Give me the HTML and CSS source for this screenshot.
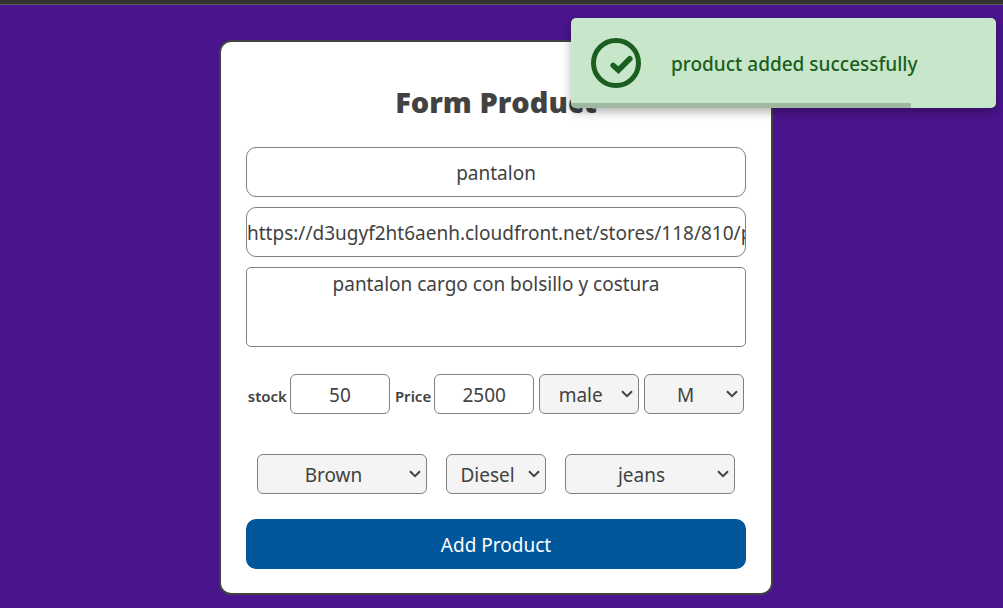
FILE: index.html
```html
<!DOCTYPE html>
<html lang="en">
<head>
<meta charset="utf-8">
<meta name="viewport" content="width=device-width, initial-scale=1">
<title>Form Product</title>
<link rel="stylesheet" href="styles.css">
</head>
<body>
<div class="topbar"></div>
<main class="page">
  <form class="card">
    <h1 class="title">Form Product</h1>
    <input class="field" type="text" aria-label="Name" value="pantalon">
    <input class="field" type="text" aria-label="Image" value="https://d3ugyf2ht6aenh.cloudfront.net/stores/118/810/products/pantalon">
    <textarea class="field area" aria-label="Description">pantalon cargo con bolsillo y costura</textarea>
    <div class="row details">
      <div class="pair">
        <label class="label" for="stock">stock</label>
        <input class="control" id="stock" type="text" inputmode="numeric" value="50">
      </div>
      <div class="pair">
        <label class="label" for="price">Price</label>
        <input class="control" id="price" type="text" inputmode="numeric" value="2500">
      </div>
      <select class="control select" aria-label="Gender"><option>male</option></select>
      <select class="control select" aria-label="Size"><option>M</option></select>
    </div>
    <div class="row kinds">
      <select class="control select wide" aria-label="Color"><option>Brown</option></select>
      <select class="control select" aria-label="Brand"><option>Diesel</option></select>
      <select class="control select wide" aria-label="Category"><option>jeans</option></select>
    </div>
    <button class="submit" type="button">Add Product</button>
  </form>
</main>
<div class="toast" role="status">
  <svg class="toast-icon" viewBox="0 0 50 50" aria-hidden="true">
    <circle cx="25" cy="25" r="22.5" fill="none" stroke="currentColor" stroke-width="5"/>
    <path d="M22.2 27.5 27.4 32.2 38.8 20.8" fill="none" stroke="currentColor" stroke-width="5.6" stroke-linecap="round"/>
  </svg>
  <span class="toast-text">product added successfully</span>
  <div class="toast-progress"></div>
</div>
</body>
</html>
```
FILE: styles.css
```css
* {
  box-sizing: border-box;
}

body {
  margin: 0;
  min-height: 100vh;
  background: #4a148c;
  color: #424242;
  font-family: "Segoe UI", "Noto Sans", sans-serif;
  font-size: 19px;
}

.topbar {
  height: 5px;
  background: #323232;
  border-bottom: 1px solid #5c5c5c;
}

.page {
  display: flex;
  justify-content: center;
  padding: 35px 11px 13px 0;
}

.card {
  display: flex;
  flex-direction: column;
  width: 100%;
  max-width: 554px;
  padding: 24px 25px;
  background: #fff;
  border: 2px solid #424242;
  border-radius: 12px;
}

.title {
  margin: 16px 0 25px;
  font-family: "Segoe UI", "Open Sans", sans-serif;
  font-size: 29px;
  font-weight: 800;
  line-height: 40px;
  text-align: center;
}

.field,
.control {
  margin: 0;
  padding: 2px 0 0;
  border: 1px solid #808080;
  background: #fff;
  color: inherit;
  font: inherit;
  text-align: center;
}

.field {
  width: 100%;
  height: 50px;
  margin-bottom: 10px;
  border-radius: 10px;
}

.area {
  height: 80px;
  margin-bottom: 27px;
  padding-top: 3px;
  border-radius: 5px;
  line-height: 26px;
  resize: none;
}

.row {
  display: flex;
  justify-content: center;
  align-items: center;
}

.details {
  gap: 5px;
  margin-bottom: 40px;
}

.kinds {
  gap: 19px;
  margin-bottom: 25px;
}

.pair {
  display: flex;
  align-items: center;
  gap: 3px;
}

.label {
  padding-top: 3px;
  font-size: 15px;
  font-weight: 600;
}

.control {
  width: 100px;
  height: 40px;
  border-radius: 6px;
}

.select {
  appearance: none;
  padding-right: 17px;
  background: #f4f4f4 url("data:image/svg+xml,%3Csvg xmlns='http://www.w3.org/2000/svg' width='12' height='8'%3E%3Cpath d='M1 1.2 6 6.2 11 1.2' fill='none' stroke='%23424242' stroke-width='2'/%3E%3C/svg%3E") no-repeat right 5px center;
}

.wide {
  width: 170px;
}

.submit {
  height: 50px;
  padding: 2px 0 0;
  border: 0;
  border-radius: 10px;
  background: #01579b;
  color: #fff;
  font: inherit;
}

.toast {
  position: absolute;
  top: 18px;
  right: 7px;
  display: flex;
  align-items: center;
  gap: 30px;
  width: 425px;
  height: 90px;
  padding: 0 20px;
  overflow: hidden;
  border-radius: 5px;
  background: #c8e6c9;
  color: #1b5e20;
  font-weight: 500;
  box-shadow: 0 4px 10px rgba(0, 0, 0, 0.3);
}

.toast-icon {
  width: 50px;
  height: 50px;
}

.toast-text {
  padding-top: 2px;
}

.toast-progress {
  position: absolute;
  bottom: 0;
  left: 0;
  width: 80%;
  height: 5px;
  background: #a0b8a1;
}
```
